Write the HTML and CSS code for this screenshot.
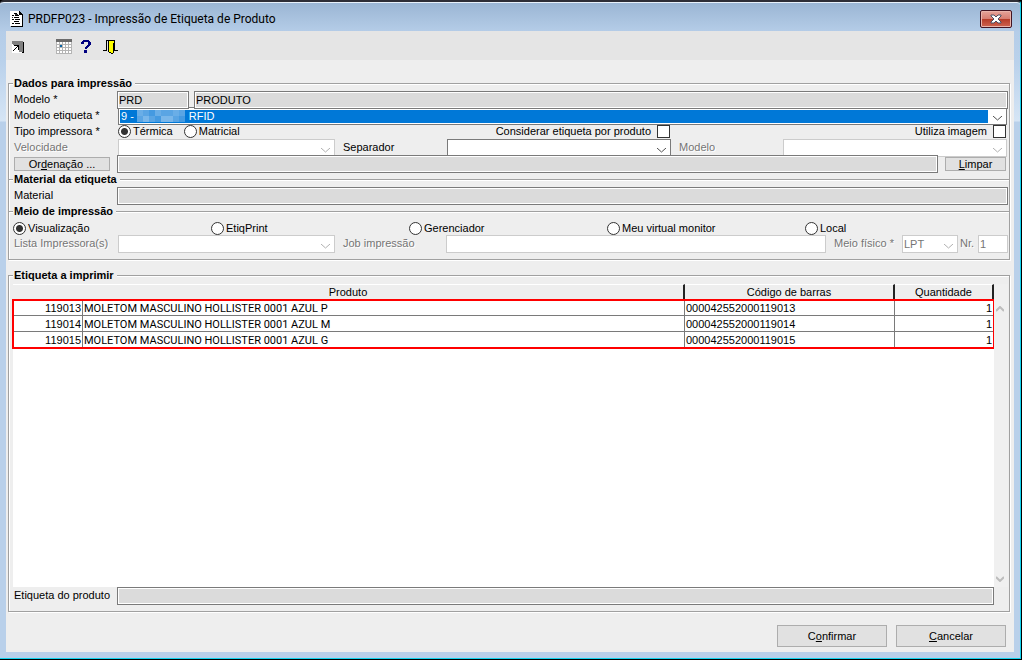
FILE: index.html
```html
<!DOCTYPE html>
<html lang="pt-BR">
<head>
    <meta charset="UTF-8">
    <meta name="viewport" content="width=device-width, initial-scale=1.0">
    <title>PRDFP023 - Impressão de Etiqueta de Produto</title>
    <link rel="stylesheet" href="styles.css">
</head>
<body>
    <div class="window">
      <header class="titlebar">
        <svg class="app-icon" width="13" height="16" viewBox="0 0 13 16" shape-rendering="crispEdges">
          <path d="M0 0h9l3 3v12H0z" fill="#fff"/>
          <path d="M9 0h1v1h1v1h1v1h1v13H1v-1h11V4H9z" fill="#000"/>
          <path d="M4 2h3v1H4zM2 4h2v1H2zM5 4h4v1H5zM4 6h5v1H4zM2 8h2v1H2zM5 8h5v1H5zM4 10h5v1H4zM2 12h2v1H2zM5 12h5v1H5z" fill="#000"/>
          <path d="M5 3h3v1H5zM2 6h1v1H2z" fill="#333"/>
        </svg>
        <h1 class="title">PRDFP023 - Impressão de Etiqueta de Produto</h1>
        <button class="close" type="button" aria-label="Fechar">
          <svg width="12" height="10" viewBox="0 0 12 10">
            <path d="M1 1h3l2 2 2-2h3v1L8 5l3 3v1H8L6 7 4 9H1V8l3-3-3-3z" fill="#fff" stroke="#4a4f63"/>
          </svg>
        </button>
      </header>
      <div class="content">
        <nav class="toolbar">
          <button class="tool tool-shortcut" type="button" aria-label="Atalho">
            <svg width="12" height="12" viewBox="0 0 12 12" shape-rendering="crispEdges">
              <path d="M0 0h11v11H0z" fill="#808080"/>
              <path d="M0 3h1v1h6v7h3v1H0z" fill="#fff"/>
              <path d="M11 1h1v11h-2v-1h1z" fill="#000"/>
              <path d="M2 4h5v5H6V6H5v1H4v1H3v1H2v1H1V9h1V8h1V7h1V6h1V5H2z" fill="#000"/>
            </svg>
          </button>
          <button class="tool tool-calendar" type="button" aria-label="Calendário">
            <svg width="16" height="15" viewBox="0 0 16 15" shape-rendering="crispEdges">
              <path d="M0 0h16v15H0z" fill="#b4b4b4"/>
              <path d="M0 0h16v3H0z" fill="#6b6b6b"/>
              <path d="M1 3h2v2H1zM4 3h2v2H4zM7 3h2v2H7zM10 3h2v2h-2zM13 3h2v2h-2zM1 6h2v2H1zM7 6h2v2H7zM10 6h2v2h-2zM13 6h2v2h-2zM1 9h2v2H1zM4 9h2v2H4zM7 9h2v2H7zM10 9h2v2h-2zM13 9h2v2h-2zM1 12h2v2H1zM4 12h2v2H4zM7 12h2v2H7zM10 12h2v2h-2zM13 12h2v2h-2z" fill="#fff"/>
              <path d="M4 6h2v2H4z" fill="#0a64a4"/>
            </svg>
          </button>
          <button class="tool tool-help" type="button" aria-label="Ajuda">
            <svg width="10" height="13" viewBox="0 0 10 13" shape-rendering="crispEdges">
              <path d="M2 0h6v1h1v1h1v3H9v1H8v1H7v1H6v1H4V7h1V6h1V5h1V2H3v2H0V2h1V1h1zM3 10h3v3H3z" fill="#000080"/>
            </svg>
          </button>
          <button class="tool" type="button" aria-label="Sair">
            <svg width="15" height="14" viewBox="0 0 15 14" shape-rendering="crispEdges">
              <path d="M3 0h9v10h3v1h-4V1H4v10H0v-1h3z" fill="#000"/>
              <path d="M5 1h6v10h-1v2H8v-1H5z" fill="#ff0"/>
              <path d="M5 1h1v11H5zM6 12h2v1H6zM8 13h2v1H8zM10 3h1v10h-1z" fill="#000"/>
            </svg>
          </button>
        </nav>

        <form class="form">
          <fieldset class="group">
            <legend>Dados para impressão</legend>
            <div class="row above">
              <label class="label" for="modelo">Modelo *</label>
              <input class="field code" id="modelo" type="text" value="PRD" readonly>
              <input class="field" type="text" value="PRODUTO" aria-label="Descrição do modelo" readonly>
            </div>
            <div class="row">
              <label class="label" for="modeloEtiqueta">Modelo etiqueta *</label>
              <div class="combo combo-selected">
                <select id="modeloEtiqueta">
                  <option>9 - &nbsp;&nbsp;&nbsp;&nbsp;&nbsp;&nbsp;&nbsp;&nbsp;&nbsp;&nbsp;&nbsp;&nbsp;&nbsp;&nbsp;&nbsp;&nbsp; RFID</option>
                </select>
                <svg class="mosaic" width="48" height="12" viewBox="0 0 8 2" preserveAspectRatio="none" shape-rendering="crispEdges">
                  <path d="M0 0h8v2H0z" fill="#5aa5e4"/>
                  <path d="M0 0h1v1H0zM3 0h1v1H3zM6 0h1v1H6z" fill="#6aaee7"/>
                  <path d="M1 1h1v1H1zM4 1h2v1H4z" fill="#7ab7ea"/>
                  <path d="M2 0h1v1H2zM3 1h1v1H3zM7 1h1v1H7z" fill="#459ae1"/>
                </svg>
                <svg class="arrow" width="9" height="5" viewBox="0 0 9 5"><path d="M0 0l4.500 4L9 0"/></svg>
              </div>
            </div>
            <div class="row columns">
              <span class="label">Tipo impressora *</span>
              <div class="radios">
                <label class="option"><input type="radio" name="tipo" checked>Térmica</label>
                <label class="option"><input type="radio" name="tipo">Matricial</label>
              </div>
              <label class="check">Considerar etiqueta por produto<input type="checkbox"></label>
              <label class="check">Utiliza imagem<input type="checkbox"></label>
            </div>
            <div class="row columns">
              <label class="label disabled" for="velocidade">Velocidade</label>
              <div class="combo combo-disabled">
                <select id="velocidade" disabled></select>
                <svg class="arrow" width="9" height="5" viewBox="0 0 9 5"><path d="M0 0l4.500 4L9 0"/></svg>
              </div>
              <label class="inner-label" for="separador">Separador</label>
              <div class="combo">
                <select id="separador"></select>
                <svg class="arrow" width="9" height="5" viewBox="0 0 9 5"><path d="M0 0l4.500 4L9 0"/></svg>
              </div>
              <label class="inner-label disabled" for="modeloImagem">Modelo</label>
              <div class="combo combo-disabled">
                <select id="modeloImagem" disabled></select>
                <svg class="arrow" width="9" height="5" viewBox="0 0 9 5"><path d="M0 0l4.500 4L9 0"/></svg>
              </div>
            </div>
            <div class="row above">
              <div class="label"><button class="btn btn-small" type="button">Or<u>d</u>enação ...</button></div>
              <input class="field" type="text" aria-label="Ordenação" readonly>
              <button class="btn btn-small btn-clear" type="button"><u>L</u>impar</button>
            </div>

            <fieldset class="section">
              <legend>Material da etiqueta</legend>
              <div class="row">
                <label class="label" for="material">Material</label>
                <input class="field" id="material" type="text" readonly>
              </div>
            </fieldset>

            <fieldset class="section">
              <legend>Meio de impressão</legend>
              <div class="row media">
                <label class="option"><input type="radio" name="meio" checked>Visualização</label>
                <label class="option"><input type="radio" name="meio">EtiqPrint</label>
                <label class="option"><input type="radio" name="meio">Gerenciador</label>
                <label class="option"><input type="radio" name="meio">Meu virtual monitor</label>
                <label class="option"><input type="radio" name="meio">Local</label>
              </div>
              <div class="row printer">
                <label class="label disabled" for="lista">Lista Impressora(s)</label>
                <div class="combo combo-disabled">
                  <select id="lista" disabled></select>
                  <svg class="arrow" width="9" height="5" viewBox="0 0 9 5"><path d="M0 0l4.500 4L9 0"/></svg>
                </div>
                <label class="inner-label disabled" for="job">Job impressão</label>
                <input class="field field-disabled" id="job" type="text" disabled>
                <label class="inner-label disabled" for="fisico">Meio físico *</label>
                <div class="combo combo-disabled">
                  <select id="fisico" disabled><option>LPT</option></select>
                  <svg class="arrow" width="9" height="5" viewBox="0 0 9 5"><path d="M0 0l4.500 4L9 0"/></svg>
                </div>
                <label class="port-label disabled" for="numero">Nr.</label>
                <input class="field field-disabled" id="numero" type="text" value="1" disabled>
              </div>
            </fieldset>
          </fieldset>

          <fieldset class="group group-list">
            <legend>Etiqueta a imprimir</legend>
            <div class="list">
              <div class="grid">
                <table>
                  <colgroup>
                    <col class="col-code">
                    <col>
                    <col class="col-bar">
                    <col class="col-qty">
                  </colgroup>
                  <thead>
                    <tr><th colspan="2">Produto</th><th>Código de barras</th><th>Quantidade</th></tr>
                  </thead>
                  <tbody>
                    <tr><td class="num">119013</td><td class="name">MOLETOM MASCULINO HOLLISTER 0001 AZUL P</td><td>000042552000119013</td><td class="num">1</td></tr>
                    <tr><td class="num">119014</td><td class="name">MOLETOM MASCULINO HOLLISTER 0001 AZUL M</td><td>000042552000119014</td><td class="num">1</td></tr>
                    <tr><td class="num">119015</td><td class="name">MOLETOM MASCULINO HOLLISTER 0001 AZUL G</td><td>000042552000119015</td><td class="num">1</td></tr>
                  </tbody>
                </table>
              </div>
              <div class="scroll">
                <svg width="8" height="6" viewBox="0 0 8 6"><path d="M0 5l4-4 4 4"/></svg>
                <svg width="8" height="6" viewBox="0 0 8 6"><path d="M0 1l4 4 4-4"/></svg>
              </div>
            </div>
            <div class="row list-footer">
              <label class="label" for="etiqueta">Etiqueta do produto</label>
              <input class="field" id="etiqueta" type="text" readonly>
            </div>
          </fieldset>

          <div class="actions">
            <button class="btn" type="button">C<u>o</u>nfirmar</button>
            <button class="btn" type="button"><u>C</u>ancelar</button>
          </div>
        </form>
      </div>
    </div>
</body>
</html>
```

FILE: styles.css
```css
* {
  margin: 0;
  padding: 0;
  box-sizing: border-box;
}
body {
  background-color: #000;
  color: #000;
  font-family: "Liberation Sans", Arial, sans-serif;
  font-size: 11px;
  line-height: 16px;
}
input, select, button {
  font: inherit;
  color: inherit;
}
svg {
  display: block;
}

/* window frame */
.window {
  display: flex;
  flex-direction: column;
  min-height: calc(100vh - 1px);
  margin: 0 1px 1px 0;
  padding: 0 6px 6px;
  border-top: 2px solid #2e2e36;
  border-right: 1px solid #12d3ee;
  border-bottom: 1px solid #12d3ee;
  border-radius: 4px 4px 0 0;
  background: linear-gradient(#9ab5d3 0, #b5cde8 30px, #b9d1eb 60px, #d6e5f5 119px, #b9d0ea 120px);
  box-shadow: inset 0 1px #e8f1fa;
}
.titlebar {
  display: flex;
  align-items: center;
  height: 29px;
  padding: 4px 2px 0 4px;
}
.title {
  flex: 1;
  margin-left: 5px;
  font-family: Roboto, sans-serif;
  font-size: 12px;
  font-weight: 400;
}
.close {
  display: flex;
  align-items: center;
  justify-content: center;
  width: 32px;
  height: 18px;
  border: 1px solid #431422;
  border-radius: 2px;
  background: linear-gradient(#e6a49a 0, #d77c70 50%, #b53a27 50%, #cf6450 100%);
  box-shadow: inset 0 0 0 1px #e9b3aa;
}
.content {
  display: flex;
  flex: 1;
  flex-direction: column;
  background-color: #eee;
}

/* toolbar */
.toolbar {
  display: flex;
  align-items: center;
  height: 29px;
  padding: 2px 6px 0;
  background-color: #e5e5e5;
}
.tool {
  border: 0;
  background: none;
}
.tool-shortcut {
  margin-right: 32px;
}
.tool-calendar {
  margin-right: 9px;
}
.tool-help {
  margin-right: 12px;
}

/* groups */
.form {
  padding: 15px 4px 5px 2px;
}
fieldset {
  min-width: 0;
  border: 0;
}
legend {
  margin-left: 4px;
  padding: 0 3px 0 1px;
  background-color: #eee;
  font-weight: bold;
}
.group {
  padding-bottom: 8px;
  border: 1px solid #a0a0a0;
  box-shadow: inset 1px 1px #fff, 1px 1px #fff;
}
.section {
  border-top: 1px solid #a0a0a0;
  box-shadow: inset 0 1px #fff;
}
.row {
  display: flex;
  height: 16px;
  padding-right: 1px;
}
.above {
  position: relative;
  z-index: 1;
}
.columns {
  display: grid;
  grid-template-columns: 108px 218fr 112px 224fr 112px 224fr;
  padding-right: 2px;
}
.printer {
  display: grid;
  grid-template-columns: 108px 218fr 111px 380fr 76px 56px 20px 30px;
}
.label {
  flex: none;
  width: 108px;
  padding-left: 5px;
}
.inner-label {
  padding-left: 8px;
}
.port-label {
  padding-left: 2px;
}
.disabled {
  color: #757575;
  text-shadow: 1px 1px #fff;
}

/* fields */
.field {
  flex: 1;
  width: 100%;
  min-width: 0;
  height: 18px;
  padding: 0 1px;
  border: 1px solid #7a7a7a;
  outline: 1px solid #fff;
  outline-offset: -2px;
  background-color: #dbdbdb;
}
.code {
  flex: none;
  width: 72px;
  margin-right: 5px;
}
.field-disabled {
  border-color: #ccc;
  background-color: #fff;
  color: #757575;
}
.combo {
  position: relative;
  flex: 1;
  height: 18px;
  border: 1px solid #7a7a7a;
  background-color: #fff;
}
.combo-disabled {
  border-color: #ccc;
  color: #757575;
}
.label + .combo {
  margin-left: 1px;
}
.combo select {
  display: block;
  width: 100%;
  height: 16px;
  padding: 0 20px 0 1px;
  border: 0;
  appearance: none;
  background: none;
  opacity: 1;
}
.combo-selected {
  margin-right: 1px;
  padding: 2px 18px 1px 1px;
}
.combo-selected select {
  height: 13px;
  padding: 0 1px;
  background-color: #0078d7;
  color: #fff;
  line-height: 13px;
}
.mosaic {
  position: absolute;
  top: 2px;
  left: 18px;
}
.arrow {
  position: absolute;
  right: 4px;
  bottom: 3px;
}
.arrow path {
  fill: none;
  stroke: #505050;
}
.combo-disabled .arrow path {
  stroke: #b0b0b0;
}

/* options */
.option, .check {
  display: flex;
  align-items: center;
}
.radios {
  display: flex;
  gap: 11px;
  padding-left: 1px;
}
.media {
  display: grid;
  grid-template-columns: repeat(5, 1fr);
  padding: 1px 6px 0 4px;
}
input[type="radio"] {
  width: 13px;
  height: 13px;
  margin-right: 2px;
  border: 1px solid #333;
  border-radius: 50%;
  appearance: none;
  background-color: #fff;
}
input[type="radio"]:checked {
  background: radial-gradient(circle, #333 3px, #fff 4px);
}
.check {
  grid-column: span 2;
  justify-content: flex-end;
  padding-right: 1px;
}
input[type="checkbox"] {
  width: 13px;
  height: 13px;
  margin-left: 6px;
  border: 1px solid #333;
  appearance: none;
  background-color: #fff;
}

/* buttons */
.btn {
  width: 110px;
  height: 22px;
  border: 1px solid #adadad;
  background-color: #e1e1e1;
}
.btn-small {
  display: block;
  width: 96px;
  height: 14px;
  margin-top: 2px;
  line-height: 12px;
}
.btn-clear {
  width: 61px;
  margin-left: 7px;
  margin-right: 2px;
}
.actions {
  display: flex;
  justify-content: flex-end;
  gap: 9px;
  padding: 13px 4px 0 0;
}

/* label list */
.group-list {
  margin-top: 7px;
}
.list {
  display: flex;
  min-height: calc(100vh - 356px);
  padding: 1px 1px 0 4px;
}
.grid {
  flex: 1;
  background-color: #fff;
}
table {
  width: 100%;
  table-layout: fixed;
  border-collapse: separate;
  border-spacing: 0;
}
.col-code {
  width: 70px;
}
.col-bar {
  width: 210px;
}
.col-qty {
  width: 99px;
}
th {
  height: 16px;
  border-top: 1px solid #fff;
  border-right: 2px solid #222;
  border-bottom: 1px solid #a0a0a0;
  background-color: #eee;
  font-weight: 400;
  line-height: 14px;
}
td {
  height: 16px;
  padding: 2px 1px 0;
  border-right: 1px solid #7a7a7a;
  border-bottom: 1px solid #7a7a7a;
  line-height: 13px;
  white-space: nowrap;
}
tbody {
  outline: 2px solid #f00;
  outline-offset: -1px;
}
.name {
  font-family: Roboto, sans-serif;
}
.num {
  text-align: right;
}
.scroll {
  display: flex;
  flex-direction: column;
  align-items: center;
  justify-content: space-between;
  width: 14px;
  padding: 22px 3px 5px 0;
  background-color: #f0f0f0;
}
.scroll path {
  fill: none;
  stroke: #bdbdbd;
  stroke-width: 2;
}
.list-footer {
  padding-right: 15px;
}
```
